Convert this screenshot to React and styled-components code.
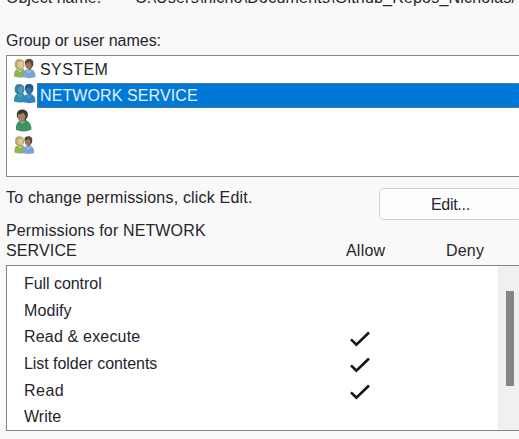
import React from 'react';
import styled, { createGlobalStyle } from 'styled-components';

const GlobalStyle = createGlobalStyle`
  * { box-sizing: border-box; }
  html, body { margin: 0; background: #f9f9f9; overflow: hidden; }
`;

const Page = styled.main`
  display: flex;
  flex-direction: column;
  width: 519px;
  height: 439px;
  padding-left: 5px;
  overflow: hidden;
  background: #f9f9f9;
  color: #25252a;
  font: 16px/20px "Liberation Sans", Arial, sans-serif;
  white-space: nowrap;
`;

const Label = styled.span`
  letter-spacing: ${(p) => p.$spacing || 0}px;
`;

const ObjectRow = styled.header`
  display: grid;
  grid-template-columns: 129px 1fr;
  height: 31px;
  flex: none;
  margin-top: -12px;
  padding-left: 1px;
`;

const GroupHeading = styled.div`
  height: 24px;
  margin-top: 12px;
  padding-left: 1px;
  flex: none;
`;

const GroupList = styled.ul`
  height: 122px;
  flex: none;
  margin: 0 0 0 1px;
  padding: 2px 0 0 6px;
  list-style: none;
  background: #fff;
  border: 1px solid #85878b;
  border-right: 0;
`;

const GroupItem = styled.li`
  display: grid;
  grid-template-columns: 24px 1fr;
  height: 25.3px;
`;

const GroupName = styled.div`
  height: 25px;
  padding: ${(p) => (p.$selected ? 2 : 1)}px 0 0 2px;
  line-height: 20px;
  border: 1px dotted ${(p) => (p.$selected ? '#9a7650' : 'transparent')};
  border-right: 0;
  background: ${(p) => (p.$selected ? '#0078d7' : 'transparent')};
  color: ${(p) => (p.$selected ? '#e4f3ff' : 'inherit')};
`;

const UserIcon = styled.svg`
  width: 24px;
  height: 24px;
  display: block;
`;

const EditRow = styled.section`
  display: grid;
  grid-template-columns: 373px 1fr;
  height: 43px;
  flex: none;
  padding: 11px 0 0 1px;
`;

const EditButton = styled.button`
  height: 32px;
  margin: 0 -4px 0 0;
  padding: 2px 0 0 51px;
  border: 1px solid #cecece;
  border-radius: 5px;
  background: #fefefe;
  color: inherit;
  font: inherit;
  text-align: left;
`;

const PermissionHeader = styled.div`
  display: grid;
  grid-template-columns: 340px 100px 1fr;
  align-items: end;
  height: 45px;
  flex: none;
  padding: 0 0 4px 1px;
`;

const PermissionPanel = styled.section`
  display: grid;
  grid-template-columns: 491px 1fr;
  grid-template-rows: 100%;
  height: 166px;
  flex: none;
  margin-left: 1px;
  border: 1px solid #85858a;
  border-right: 0;
  background: #fff;
`;

const PermissionRows = styled.div`
  padding-top: 8px;
`;

const PermissionRow = styled.div`
  display: grid;
  grid-template-columns: 325px 1fr;
  height: 26.65px;
  padding-left: 17px;
`;

const CheckIcon = styled.svg`
  width: 22px;
  height: 18px;
  margin-top: 2.500px;
`;

const ScrollTrack = styled.div`
  padding: 25px 5px 0 8px;
  background: #f0f0f0;
`;

const ScrollThumb = styled.div`
  height: 95px;
  background: #868686;
`;

const PALETTES = {
  normal: { hair1: '#b9a866', face1: '#e0c69c', body1: '#94b258', hair2: '#5a463a', face2: '#a0765a', body2: '#7ba5d6' },
  selected: { hair1: '#34839c', face1: '#4d9bbd', body1: '#3090a8', hair2: '#205a80', face2: '#2f74a2', body2: '#3581c9' },
};

function People({ tone = 'normal', small }) {
  const c = PALETTES[tone];
  return (
    <UserIcon viewBox={small ? '-0.5 -1.5 26 26' : '0 0 24 24'} aria-hidden="true">
      <path d="M1 18.5c0-5 1-7 4-8l5-.5c2 2 2.5 6 1.5 9-4 1-7 .7-10.5-.5Z" fill={c.body1} />
      <path d="M2 9C1 4 2.500 1 6 1c4.500 0 6.500 3 5 8L9 11H4Z" fill={c.hair1} />
      <path d="M5 4c2 .2 3-.5 4-1.500 2 3 1.700 6-.5 8C5.500 10.500 4 7.500 5 4Z" fill={c.face1} />
      <path d="m5 11 2 3 2-3" fill="none" stroke={tone === 'selected' ? '#75bad2' : '#e6e7bc'} strokeWidth="1" opacity=".65" />
      <path d="M10 19c-.5-5 1-7 4-7.500l4-.5c3 1 4.500 3.500 4.500 8-4 1.500-8 1.500-12.500 0Z" fill={c.body2} />
      <path d="M12 6c-.5-3.500 1-5 4-5 4 0 5 2.500 4 7l-3 4-4-3Z" fill={c.hair2} />
      <path d="M13 5c2 .5 3-.5 4-1.500l1.500 4c-.3 2.500-1.500 4-3 4C13.500 11 12 8 13 5Z" fill={c.face2} />
      <path d="m14 12 1.500 3 3-3.500" fill="none" stroke={tone === 'selected' ? '#61a9dd' : '#b9d8ef'} strokeWidth="1" opacity=".75" />
    </UserIcon>
  );
}

function Person() {
  return (
    <UserIcon viewBox="0 0 24 24" aria-hidden="true">
      <path d="M3 21c-.5-5 1-8 4-9.500l5-1c4 1.500 6.500 5 6.500 10-4 2.500-10.500 2.500-15.500.5Z" fill="#3f9166" />
      <path d="M4 8c-1-4 1-7.500 5-7.500S16 3 14.500 8L12 12H7Z" fill="#3d3830" />
      <path d="M5 5c2 .5 4 0 5-1.500l2.500 3c0 4-2 6-4 6.500C6 12 4 9 5 5Z" fill="#a8805f" />
      <path d="m7 12.500 2 2 3-3" fill="none" stroke="#a5c8b0" strokeWidth="1" />
    </UserIcon>
  );
}

function Check() {
  return (
    <CheckIcon viewBox="0 0 22 18" aria-label="Allowed">
      <path d="m2 9.300 5.400 5.400L20 2.500" fill="none" stroke="#151515" strokeWidth="2.600" />
    </CheckIcon>
  );
}

const groups = [
  { name: 'SYSTEM', icon: <People />, spacing: 0.4 },
  { name: 'NETWORK SERVICE', icon: <People tone="selected" />, selected: true, spacing: 0.1 },
  { name: '', icon: <Person /> },
  { name: '', icon: <People small /> },
];

const permissions = [
  { name: 'Full control', spacing: -0.05 },
  { name: 'Modify', spacing: 0.1 },
  { name: 'Read & execute', allow: true, spacing: 0.18 },
  { name: 'List folder contents', allow: true, spacing: -0.05 },
  { name: 'Read', allow: true, spacing: 0.5 },
  { name: 'Write', spacing: 0.05 },
];

export default function App() {
  return (
    <>
      <GlobalStyle />
      <Page>
        <ObjectRow>
          <Label>Object name:</Label>
          <Label $spacing={0.2}>C:\Users\nicho\Documents\Github_Repos_Nicholas/</Label>
        </ObjectRow>
        <GroupHeading><Label $spacing={-0.03}>Group or user names:</Label></GroupHeading>
        <GroupList>
          {groups.map((g, i) => (
            <GroupItem key={i}>
              {g.icon}
              <GroupName $selected={g.selected}><Label $spacing={g.spacing}>{g.name}</Label></GroupName>
            </GroupItem>
          ))}
        </GroupList>
        <EditRow>
          <Label $spacing={0.19}>To change permissions, click Edit.</Label>
          <EditButton><Label $spacing={-0.3}>Edit...</Label></EditButton>
        </EditRow>
        <PermissionHeader>
          <Label $spacing={0.14}>Permissions for NETWORK<br />SERVICE</Label>
          <Label $spacing={0.2}>Allow</Label>
          <Label $spacing={0.2}>Deny</Label>
        </PermissionHeader>
        <PermissionPanel>
          <PermissionRows>
            {permissions.map((p) => (
              <PermissionRow key={p.name}>
                <Label $spacing={p.spacing}>{p.name}</Label>
                {p.allow && <Check />}
              </PermissionRow>
            ))}
          </PermissionRows>
          <ScrollTrack><ScrollThumb /></ScrollTrack>
        </PermissionPanel>
      </Page>
    </>
  );
}
